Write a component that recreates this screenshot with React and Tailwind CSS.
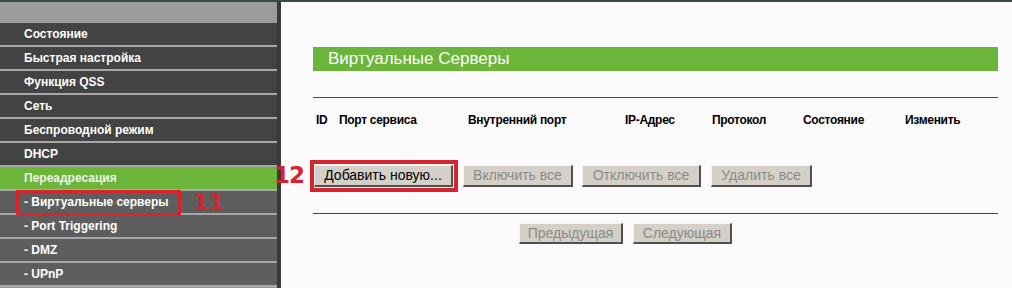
import React from "react";

const menu = [
  { t: "Состояние" },
  { t: "Быстрая настройка" },
  { t: "Функция QSS" },
  { t: "Сеть" },
  { t: "Беспроводной режим" },
  { t: "DHCP" },
  { t: "Переадресация", active: true },
  { t: "- Виртуальные серверы", sub: true, current: true },
  { t: "- Port Triggering", sub: true },
  { t: "- DMZ", sub: true },
  { t: "- UPnP", sub: true },
];

function Btn({ children, w, enabled, h = "h-[22px]" }) {
  return (
    <div
      className={`${w} ${h} flex items-center justify-center bg-[#d4d0c8] border-t border-l border-t-[#f4f4f4] border-l-[#f4f4f4] border-r-2 border-b-2 border-r-[#505050] border-b-[#505050] text-[14px] ${
        enabled ? "text-black" : "text-[#8a8a8a]"
      }`}
    >
      {children}
    </div>
  );
}

export default function App() {
  return (
    <div
      className="w-[1012px] h-[288px] overflow-hidden bg-[#fbfbfb]"
      style={{ fontFamily: '"Liberation Sans", Arial, sans-serif' }}
    >
      <div className="h-[2px] bg-[#3d4a3d]" />
      <div className="flex h-[286px]">
        {/* Sidebar */}
        <div className="w-[277px] flex flex-col bg-[#9a9a9a]">
          <div className="h-[21px] bg-[#9b9b9b]" />
          {menu.map((m, i) => (
            <div key={i} className="relative">
              <div
                className={`h-[22px] flex items-center pl-[24px] text-[12px] font-bold ${
                  m.active
                    ? "bg-[#6bb53b] text-[#eef4e6]"
                    : m.sub
                    ? "bg-[#5e5e5e] text-white"
                    : "bg-[#434343] text-white"
                } ${m.current ? "text-[#cbe04c]" : ""}`}
              >
                {m.t}
              </div>
              <div className="h-[2px] bg-[#a8a8a8]" />
              {m.current && (
                <>
                  <div className="absolute left-[16px] top-[-1px] w-[165px] h-[26px] border-[3px] border-[#d8222c]" />
                  <div
                    className="absolute left-[193px] top-[-2px] text-[23px] leading-[26px] font-bold text-[#d42430] tracking-[-1px]"
                    style={{ fontFamily: '"DejaVu Sans", sans-serif' }}
                  >
                    11
                  </div>
                </>
              )}
            </div>
          ))}
        </div>
        <div className="w-[4px] bg-[#3a3a3a]" />
        {/* Main */}
        <div className="flex-1 bg-[#fbfbfb] pl-[32px]">
          <div className="w-[685px]">
            <div className="mt-[45px] h-[24px] bg-[#6bb53b] flex items-center pl-[15px] text-[17px] text-white">
              Виртуальные Серверы
            </div>
            <div className="mt-[26px] h-[1px] bg-[#2f5050]" />
            <div className="mt-[13px] h-[18px] flex items-center text-[12px] font-bold text-black tracking-[-0.3px]">
              <div className="w-[26px] pl-[3px]">ID</div>
              <div className="w-[129px]">Порт сервиса</div>
              <div className="w-[157px]">Внутренний порт</div>
              <div className="w-[87px]">IP-Адрес</div>
              <div className="w-[91px]">Протокол</div>
              <div className="w-[102px]">Состояние</div>
              <div>Изменить</div>
            </div>
            <div className="mt-[36px] flex items-center pl-[1px]">
              <div className="relative">
                <Btn w="w-[139px]" enabled>
                  Добавить новую...
                </Btn>
                <div className="absolute left-[-4px] top-[-5px] w-[148px] h-[32px] border-[4px] border-[#d8222c]" />
                <div
                  className="absolute left-[-40px] top-[-3px] text-[23px] leading-[26px] font-bold text-[#d42430] tracking-[-1px]"
                  style={{ fontFamily: '"DejaVu Sans", sans-serif' }}
                >
                  12
                </div>
              </div>
              <div className="ml-[10px]">
                <Btn w="w-[110px]">Включить все</Btn>
              </div>
              <div className="ml-[9px]">
                <Btn w="w-[119px]">Отключить все</Btn>
              </div>
              <div className="ml-[10px]">
                <Btn w="w-[101px]">Удалить все</Btn>
              </div>
            </div>
            <div className="mt-[26px] h-[1px] bg-[#2f5050]" />
            <div className="mt-[9px] flex pl-[206px] gap-[10px]">
              <Btn w="w-[104px]" h="h-[21px]">
                Предыдущая
              </Btn>
              <Btn w="w-[99px]" h="h-[21px]">
                Следующая
              </Btn>
            </div>
          </div>
        </div>
      </div>
    </div>
  );
}
